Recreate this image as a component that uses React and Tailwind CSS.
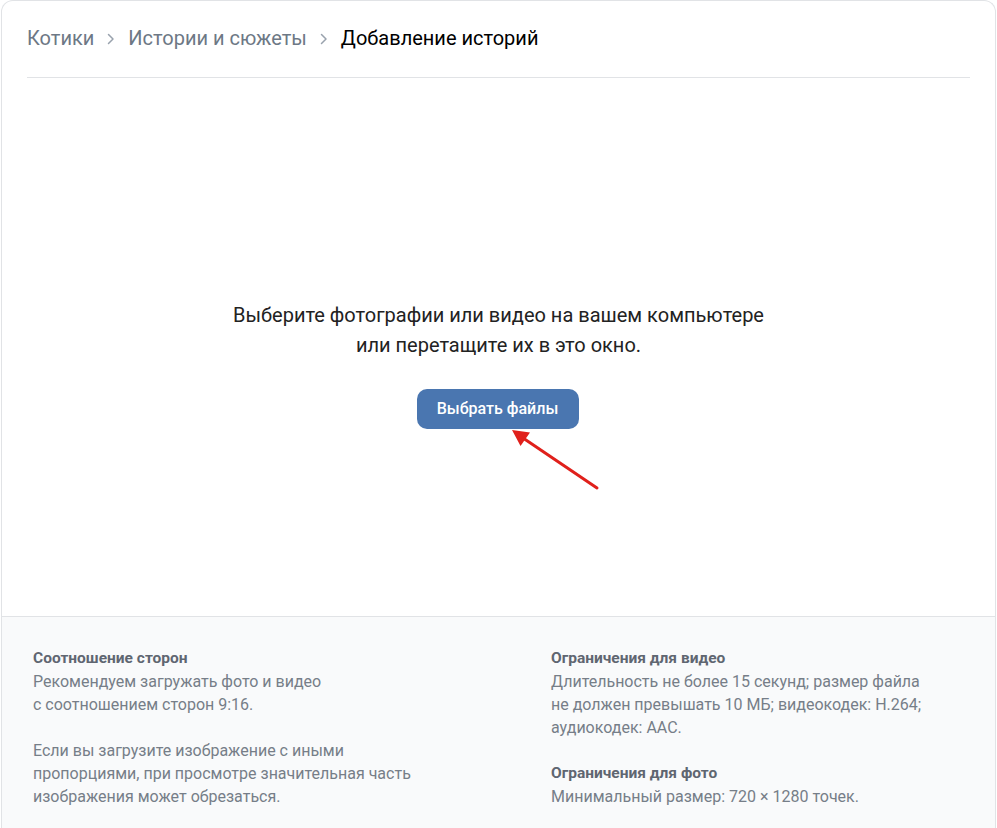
import React from 'react';

function Chevron() {
  return (
    <svg width="10" height="16" viewBox="0 0 10 16" className="mx-[12px] mt-[2px]">
      <path d="M2.5 3.5 L7 8 L2.5 12.5" fill="none" stroke="#99a2ad" strokeWidth="1.5" strokeLinecap="round" strokeLinejoin="round" />
    </svg>
  );
}

export default function App() {
  const crumbs = ['Котики', 'Истории и сюжеты'];
  return (
    <div className="min-h-[828px] bg-white" style={{ fontFamily: 'Roboto, "Noto Sans", sans-serif' }}>
      <div className="ml-px w-[995px] rounded-t-xl border-x border-t border-[#e1e3e6] bg-white overflow-hidden">
        <div className="mx-[25px] flex h-[77px] items-center border-b border-[#e1e3e6] pb-[2px]">
          {crumbs.map(c => (
            <React.Fragment key={c}>
              <span className="text-[20px] text-[#6d7885]">{c}</span>
              <Chevron />
            </React.Fragment>
          ))}
          <span className="text-[20px] text-black">Добавление историй</span>
        </div>

        <div className="flex h-[538px] flex-col items-center pt-[222px]">
          <p className="text-center text-[20px] leading-[30px] text-[#222]">
            Выберите фотографии или видео на вашем компьютере
            <br />
            или перетащите их в это окно.
          </p>
          <div className="relative mt-[29px] ml-[-2px]">
            <button className="h-[40px] w-[162px] rounded-[10px] bg-[#4a76b0] text-[16px] font-medium text-white">
              Выбрать файлы
            </button>
            <svg className="pointer-events-none absolute left-0 top-0 overflow-visible" width="200" height="110">
              <line x1="180" y1="99" x2="106" y2="49" stroke="#e0201b" strokeWidth="3" strokeLinecap="round" />
              <polygon points="95,41 113,43.5 103.5,57" fill="#e0201b" />
            </svg>
          </div>
        </div>

        <div className="grid grid-cols-[518px_1fr] border-t border-[#e1e3e6] bg-[#f9fafb] px-[31px] pt-[30px] pb-[40px] text-[16px] leading-[23px] text-[#767e88]">
          <div>
            <div className="font-bold text-[#5f6671] text-[15.5px]">Соотношение сторон</div>
            <p>
              Рекомендуем загружать фото и видео
              <br />
              с соотношением сторон 9:16.
            </p>
            <p className="mt-[23px]">
              Если вы загрузите изображение с иными
              <br />
              пропорциями, при просмотре значительная часть
              <br />
              изображения может обрезаться.
            </p>
          </div>
          <div>
            <div className="font-bold text-[#5f6671] text-[15.5px]">Ограничения для видео</div>
            <p>
              Длительность не более 15 секунд; размер файла
              <br />
              не должен превышать 10 МБ; видеокодек: H.264;
              <br />
              аудиокодек: AAC.
            </p>
            <div className="mt-[23px] font-bold text-[#5f6671] text-[15.5px]">Ограничения для фото</div>
            <p>Минимальный размер: 720 × 1280 точек.</p>
          </div>
        </div>
      </div>
    </div>
  );
}
